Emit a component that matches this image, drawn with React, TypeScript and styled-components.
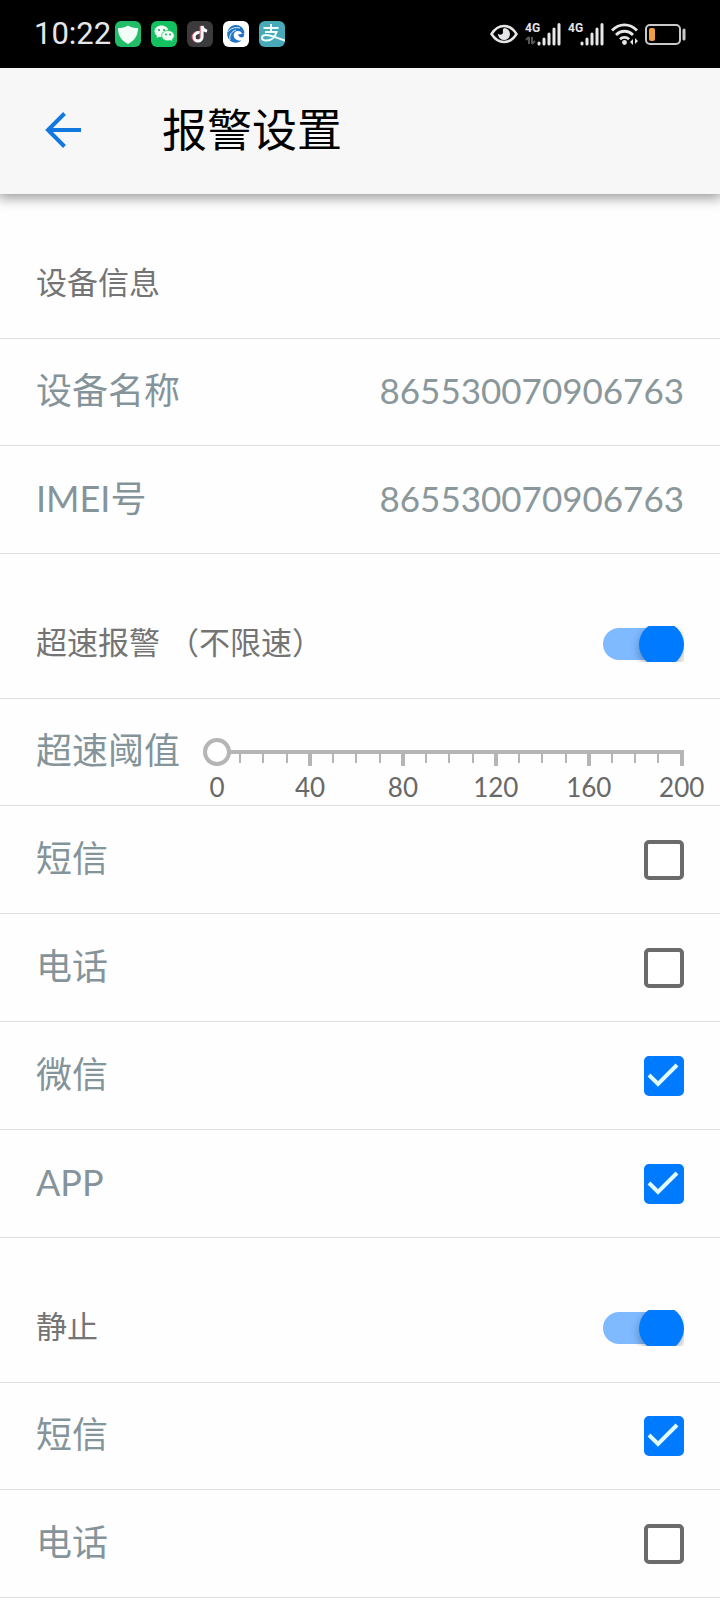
import React, { useState } from "react";
import styled, { createGlobalStyle } from "styled-components";

const Global = createGlobalStyle`
  *, *::before, *::after { box-sizing: border-box; }
  body {
    margin: 0;
    background: #fefefe;
    font-family: Lato, "Noto Sans CJK SC", sans-serif;
  }
`;

const line = "#dfdfdf";
const blue = "#007aff";

const StatusBar = styled.div`
  display: flex;
  align-items: center;
  justify-content: space-between;
  height: 68px;
  padding: 0 34px;
  background: #000;
  color: #e6e6e8;
`;

const StatusGroup = styled.div<{ $gap: number }>`
  display: flex;
  align-items: center;
  gap: ${(p) => p.$gap}px;
`;

const Clock = styled.time`
  font: 400 31px/36px Roboto, sans-serif;
`;

const Glyph = styled.svg`
  display: block;
  flex: none;
`;

const AppBar = styled.header`
  position: relative;
  display: flex;
  align-items: center;
  gap: 70px;
  height: 126px;
  padding: 0 34px 2px;
  background: #f7f7f7;
  box-shadow: 0 2px 12px 2px rgba(0, 0, 0, 0.4);
`;

const BackButton = styled.button`
  display: grid;
  place-items: center;
  width: 58px;
  height: 58px;
  padding: 0;
  border: 0;
  background: none;
  color: #1278e0;
`;

const Title = styled.h1`
  margin: 0;
  font-size: 45px;
  font-weight: 400;
  line-height: 60px;
  color: #000;
`;

const SectionHead = styled.div`
  display: flex;
  align-items: center;
  justify-content: space-between;
  height: 145px;
  padding: 36px 36px 0;
  border-bottom: 1px solid ${line};
`;

const SectionTitle = styled.h2`
  margin: 0;
  padding-bottom: 4px;
  font-size: 31px;
  font-weight: 400;
  line-height: 40px;
  color: #747474;
`;

const List = styled.div`
  display: flex;
  flex-direction: column;
`;

const Row = styled.div`
  display: flex;
  align-items: center;
  justify-content: space-between;
  height: 108px;
  padding: 0 36px;
  border-bottom: 1px solid ${line};
  color: #84949a;

  &:first-child {
    height: 107px;
  }
`;

const RowLabel = styled.label`
  flex: none;
  padding-bottom: 4px;
  font-size: 36px;
  line-height: 48px;
`;

const RowValue = styled.output`
  padding-bottom: 4px;
  font-size: 35px;
  line-height: 48px;
  color: #8a979b;
`;

const CheckBox = styled.input`
  appearance: none;
  display: grid;
  place-items: center;
  width: 40px;
  height: 40px;
  margin: 0;
  border: 4px solid #6b6b6b;
  border-radius: 5px;
  background: #fff;

  &:checked {
    border-color: ${blue};
    background: ${blue};
  }
`;

const CheckWrap = styled.span`
  display: grid;

  > * {
    grid-area: 1 / 1;
  }

  svg {
    pointer-events: none;
  }
`;

const Switch = styled.input`
  appearance: none;
  display: flex;
  align-items: center;
  width: 81px;
  height: 36px;
  margin: 0;
  overflow: hidden;

  &::before {
    content: "";
    flex: none;
    width: 78px;
    height: 32px;
    border-radius: 16px;
    background: #b4b4b4;
  }

  &::after {
    content: "";
    flex: none;
    width: 45px;
    height: 45px;
    margin-left: -78px;
    border-radius: 50%;
    background: #fff;
    box-shadow: 0 4px 8px rgba(0, 0, 0, 0.3);
  }

  &:checked::before {
    background: #7fb9ff;
  }

  &:checked::after {
    margin-left: -42px;
    background: ${blue};
  }
`;

const Slider = styled.div`
  flex: 1;
  align-self: flex-start;
  min-width: 0;
  margin-left: 23px;
  padding-top: 39px;
`;

const Range = styled.input`
  appearance: none;
  position: relative;
  z-index: 1;
  display: block;
  width: 100%;
  height: 28px;
  margin: 0;
  background: linear-gradient(#b5b5b5, #b5b5b5) 14px center / 100% 4px no-repeat;

  &::-webkit-slider-thumb {
    appearance: none;
    width: 28px;
    height: 28px;
    border: 4px solid #b5b5b5;
    border-radius: 50%;
    background: #fff;
  }
`;

const Scale = styled.div`
  display: flex;
  justify-content: space-between;
  margin: -12px 0 0 12px;
`;

const Tick = styled.span<{ $major: boolean }>`
  display: flex;
  flex-direction: column;
  align-items: center;
  gap: 4px;
  width: 4px;
  font-size: 26px;
  line-height: 34px;
  white-space: nowrap;
  color: #686868;

  &::before {
    content: "";
    flex: none;
    width: ${(p) => (p.$major ? 4 : 2)}px;
    height: ${(p) => (p.$major ? 12 : 9)}px;
    background: #b5b5b5;
  }
`;

const SignalText = styled.text`
  font: 700 12px Roboto, sans-serif;
  fill: #e6e6e8;
`;

function Signal({ data }: { data?: boolean }) {
  return (
    <Glyph width="36" height="26" viewBox="0 0 36 26">
      <SignalText x="0" y="11">4G</SignalText>
      {data && (
        <path d="M4 16v7M4 16l-3 3M7 16v7M7 23l3-3" stroke="#555" strokeWidth="2" fill="none" />
      )}
      <path
        d="M14 22v1M19 18v5M24 13v10M29 8v15M34 3.500v19.500"
        stroke="#e8e8e8"
        strokeWidth="3"
        strokeLinecap="round"
      />
    </Glyph>
  );
}

function Check({ id, initial }: { id: string; initial: boolean }) {
  const [on, setOn] = useState(initial);
  return (
    <CheckWrap>
      <CheckBox id={id} type="checkbox" checked={on} onChange={() => setOn(!on)} />
      {on && (
        <Glyph width="40" height="40" viewBox="0 0 40 40">
          <path d="M5 19l9 9L33 9" fill="none" stroke="#e2fcff" strokeWidth="4" />
        </Glyph>
      )}
    </CheckWrap>
  );
}

function CheckRow({ id, label, initial }: { id: string; label: string; initial: boolean }) {
  return (
    <Row>
      <RowLabel htmlFor={id}>{label}</RowLabel>
      <Check id={id} initial={initial} />
    </Row>
  );
}

function SwitchHead({ id, label }: { id: string; label: string }) {
  const [on, setOn] = useState(true);
  return (
    <SectionHead>
      <SectionTitle>
        <label htmlFor={id}>{label}</label>
      </SectionTitle>
      <Switch id={id} type="checkbox" role="switch" checked={on} onChange={() => setOn(!on)} />
    </SectionHead>
  );
}

const speeds = Array.from({ length: 21 }, (_, i) => i * 10);

export default function App() {
  const [speed, setSpeed] = useState(0);
  return (
    <>
      <Global />
      <StatusBar>
        <StatusGroup $gap={4}>
          <Clock>10:22</Clock>
          <StatusGroup $gap={10}>
            <Glyph width="26" height="26" viewBox="0 0 26 26">
              <rect width="26" height="26" rx="6" fill="#22bd68" />
              <path d="M13 4.500c3 2 6 2.500 10 2.500 0 7-3 12.500-10 16C6 19.500 3 14 3 7c4 0 7-.5 10-2.500z" fill="#f2fff8" />
            </Glyph>
            <Glyph width="26" height="26" viewBox="0 0 26 26">
              <rect width="26" height="26" rx="6" fill="#14c160" />
              <path d="M10.500 4.500c-4 0-7 2.600-7 5.800 0 1.900 1 3.500 2.500 4.500L5.500 17l2.600-1.300c.8.200 1.600.3 2.400.3 4 0 7-2.600 7-5.800s-3-5.700-7-5.700z" fill="#effff5" />
              <path d="M17 9.500c-3.600 0-6.300 2.300-6.300 5.200s2.700 5.200 6.300 5.200c.8 0 1.500-.1 2.200-.3l2.300 1.200-.5-2c1.400-1 2.300-2.400 2.300-4.100 0-2.900-2.700-5.200-6.300-5.200z" fill="#effff5" stroke="#14c160" strokeWidth=".8" />
              <g fill="#14a050">
                <circle cx="8" cy="9" r="1" />
                <circle cx="13" cy="9" r="1" />
                <circle cx="15" cy="13.500" r=".9" />
                <circle cx="19" cy="13.500" r=".9" />
              </g>
            </Glyph>
            <Glyph width="26" height="26" viewBox="0 0 26 26">
              <rect width="26" height="26" rx="6" fill="#3b3a3c" />
              <g fill="none" strokeWidth="3">
                <path d="M11.500 11.500c-3-.3-5.500 1.700-5.500 4.500 0 2.400 1.900 4 4 4s4-1.700 4-4V5c.5 2.800 2.200 4.600 5 5" stroke="#e0455c" />
                <path d="M12.600 11.500c-3-.3-5.500 1.700-5.500 4.500 0 2.400 1.900 4 4 4s4-1.700 4-4V5c.5 2.800 2.200 4.600 5 5" stroke="#f6ffff" />
              </g>
            </Glyph>
            <Glyph width="26" height="26" viewBox="0 0 26 26">
              <rect width="26" height="26" rx="6" fill="#fff" />
              <path d="M21.500 12C21 7 17 3.800 12.500 4 8 4.200 4.200 8 4.200 13c0 5 3.800 8.700 8.500 8.700 2.200 0 4.300-.8 5.800-2.200-4 .7-7.500-1.500-7.800-4.700-.2-2.700 2-4.800 4.600-4.700 2 .1 3.200 1.200 3.500 2.800z" fill="#2074c4" />
              <path d="M4.500 11C8 7 12 6 17 7M7 19c-1-5 1.500-8.500 6-10" fill="none" stroke="#e8f5ff" strokeWidth="1" />
              <path d="M15 13.500c1 2.500 3 3.500 5.500 2.500l1-3.500z" fill="#2074c4" />
            </Glyph>
            <Glyph width="26" height="26" viewBox="0 0 26 26">
              <rect width="26" height="26" rx="6" fill="#48aab8" />
              <path d="M4.500 7h15M12 3v8M6 11h11.500c-1.500 5-5 8.500-10 8.500-3.200 0-4.500-1.300-4.500-2.800 0-1.700 1.700-2.700 4-2.700 5 0 11 3 19 5.500" fill="none" stroke="#f0ffff" strokeWidth="2" />
            </Glyph>
          </StatusGroup>
        </StatusGroup>
        <StatusGroup $gap={7}>
          <Glyph width="28" height="20" viewBox="0 0 28 20">
            <path d="M1.500 10C5 4.500 9 2 14 2s9 2.500 12.500 8C23 15.500 19 18 14 18S5 15.500 1.500 10z" fill="none" stroke="#e6e6e8" strokeWidth="2.500" />
            <path d="M14 4a6 6 0 1 1-6 5.500c1 1.800 4.500 1.500 5-.8.300-1.700-1-2.700 1-4.700z" fill="#e6e6e8" />
          </Glyph>
          <Signal data />
          <Signal />
          <Glyph width="27" height="24" viewBox="0 0 27 24">
            <g fill="none" stroke="#e6e6e8" strokeWidth="2.800">
              <path d="M1 8.500C8 1 19 1 26 8.500" />
              <path d="M5 13c5-5 12-5 17 0" />
              <path d="M9 17.200c2.500-2.500 6.500-2.500 9 0" />
            </g>
            <circle cx="13.500" cy="20.500" r="2.400" fill="#e6e6e8" />
            <path d="M22 17v6l-3-3zM24 16v6l3-3z" fill="#e6e6e8" />
          </Glyph>
          <Glyph width="41" height="21" viewBox="0 0 41 21">
            <rect x="1" y="1" width="34" height="19" rx="4" fill="none" stroke="#c9c9cb" strokeWidth="2" />
            <rect x="4" y="4" width="6" height="13" rx="2" fill="#f0a040" />
            <path d="M39 6v9" stroke="#c9c9cb" strokeWidth="3" strokeLinecap="round" />
          </Glyph>
        </StatusGroup>
      </StatusBar>

      <AppBar>
        <BackButton aria-label="返回">
          <Glyph width="36" height="36" viewBox="0 0 36 36">
            <path d="M36 18H3M19.500 1.500L3 18l16.500 16.500" fill="none" stroke="currentColor" strokeWidth="4" />
          </Glyph>
        </BackButton>
        <Title>报警设置</Title>
      </AppBar>

      <main>
        <section>
          <SectionHead>
            <SectionTitle>设备信息</SectionTitle>
          </SectionHead>
          <List>
            <Row>
              <RowLabel htmlFor="device-name">设备名称</RowLabel>
              <RowValue id="device-name">865530070906763</RowValue>
            </Row>
            <Row>
              <RowLabel htmlFor="device-imei">IMEI号</RowLabel>
              <RowValue id="device-imei">865530070906763</RowValue>
            </Row>
          </List>
        </section>

        <section>
          <SwitchHead id="overspeed" label="超速报警 （不限速）" />
          <List>
            <Row>
              <RowLabel htmlFor="speed-limit">超速阈值</RowLabel>
              <Slider>
                <Range
                  id="speed-limit"
                  type="range"
                  min={0}
                  max={200}
                  step={10}
                  value={speed}
                  onChange={(e) => setSpeed(Number(e.target.value))}
                />
                <Scale>
                  {speeds.map((s) => (
                    <Tick key={s} $major={s % 40 === 0}>
                      {s % 40 === 0 ? s : null}
                    </Tick>
                  ))}
                </Scale>
              </Slider>
            </Row>
            <CheckRow id="overspeed-sms" label="短信" initial={false} />
            <CheckRow id="overspeed-call" label="电话" initial={false} />
            <CheckRow id="overspeed-wechat" label="微信" initial />
            <CheckRow id="overspeed-app" label="APP" initial />
          </List>
        </section>

        <section>
          <SwitchHead id="still" label="静止" />
          <List>
            <CheckRow id="still-sms" label="短信" initial />
            <CheckRow id="still-call" label="电话" initial={false} />
          </List>
        </section>
      </main>
    </>
  );
}
